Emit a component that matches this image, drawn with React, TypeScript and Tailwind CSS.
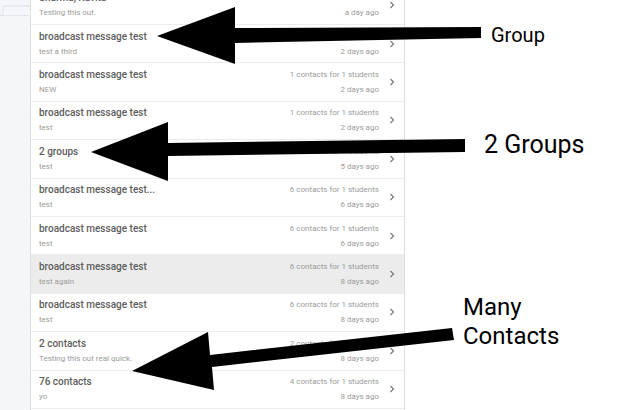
import React from 'react'

interface Message {
  title: string
  preview: string
  recipients: string
  age: string
  active?: boolean
}

const messages: Message[] = [
  { title: 'Sharma, Kavita', preview: 'Testing this out.', recipients: '1 contacts for 1 students', age: 'a day ago' },
  { title: 'broadcast message test', preview: 'test a third', recipients: '1 contacts for 1 students', age: '2 days ago' },
  { title: 'broadcast message test', preview: 'NEW', recipients: '1 contacts for 1 students', age: '2 days ago' },
  { title: 'broadcast message test', preview: 'test', recipients: '1 contacts for 1 students', age: '2 days ago' },
  { title: '2 groups', preview: 'test', recipients: '2 contacts for 1 students', age: '5 days ago' },
  { title: 'broadcast message test...', preview: 'test', recipients: '6 contacts for 1 students', age: '6 days ago' },
  { title: 'broadcast message test', preview: 'test', recipients: '6 contacts for 1 students', age: '6 days ago' },
  { title: 'broadcast message test', preview: 'test again', recipients: '6 contacts for 1 students', age: '8 days ago', active: true },
  { title: 'broadcast message test', preview: 'test', recipients: '6 contacts for 1 students', age: '8 days ago' },
  { title: '2 contacts', preview: 'Testing this out real quick.', recipients: '2 contacts for 1 students', age: '8 days ago' },
  { title: '76 contacts', preview: 'yo', recipients: '4 contacts for 1 students', age: '8 days ago' },
]

const Chevron = () => (
  <svg width="6" height="8" viewBox="0 0 6 8" className="ml-[10px] shrink-0">
    <path d="M1.5 1 L4.5 4 L1.5 7" fill="none" stroke="#7a7a7a" strokeWidth="1.2" />
  </svg>
)

const MessageRow = ({ msg }: { msg: Message }) => (
  <div
    className={`flex h-[38.4px] items-center border-b border-[#ececec] pl-2 pr-[9px] ${
      msg.active ? 'bg-[#ececec]' : 'bg-white'
    }`}
  >
    <div className="min-w-0 flex-1">
      <div className="truncate text-[10px] font-medium leading-[15px] text-[#5e5e5e]">{msg.title}</div>
      <div className="truncate text-[8px] leading-[15px] text-[#9b9b9b]">{msg.preview}</div>
    </div>
    <div className="text-right text-[8px] leading-[15px] text-[#9b9b9b]">
      <div>{msg.recipients}</div>
      <div>{msg.age}</div>
    </div>
    <Chevron />
  </div>
)

export default function App() {
  return (
    <div
      className="relative flex h-[410px] w-[623px] overflow-hidden bg-white"
      style={{ fontFamily: 'Roboto, "Liberation Sans", sans-serif' }}
    >
      {/* left sidebar strip */}
      <div className="relative w-[30px] shrink-0 bg-[#f4f6f9]">
        <svg width="30" height="30" className="absolute left-0 top-0">
          <path d="M0 15.5 H30" stroke="#c9d3de" strokeWidth="0.8" strokeDasharray="1.5 1.5" />
          <path d="M0 15.5 H2 L4 6 H30" fill="none" stroke="#d5dde6" strokeWidth="0.8" />
        </svg>
      </div>

      {/* message list */}
      <div className="w-[375px] shrink-0 border-x border-[#dedede] bg-white">
        <div className="mt-[-13.4px]">
          {messages.map((m, i) => (
            <MessageRow key={i} msg={m} />
          ))}
        </div>
      </div>

      <div className="flex-1 bg-white" />

      {/* annotations */}
      <svg width="623" height="410" className="pointer-events-none absolute left-0 top-0">
        <polygon points="157,36 235,7 235,28 481,27 481,38 235,43 235,64" fill="#000" />
        <polygon points="91,152 168,122 168,143 465,139 465,152 168,156 168,181" fill="#000" />
        <polygon points="132,371 208,332 210,355 452,328 454,340 212,367 214,390" fill="#000" />
      </svg>
      <div className="absolute left-[491px] top-[25px] text-[20px] leading-[20px] text-black">Group</div>
      <div className="absolute left-[484px] top-[132px] text-[25px] leading-[25px] text-black">2 Groups</div>
      <div className="absolute left-[463px] top-[293px] text-[24px] leading-[29px] text-black">
        Many
        <br />
        Contacts
      </div>
    </div>
  )
}
